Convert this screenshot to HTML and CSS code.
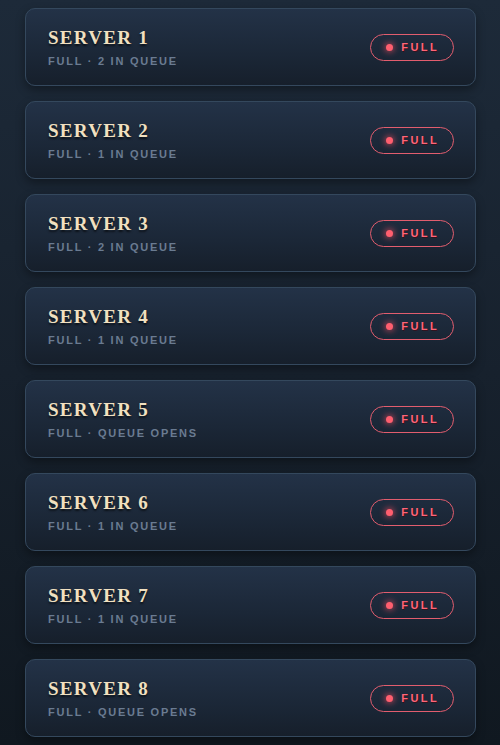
FILE: index.html
```html
<!DOCTYPE html>
<html lang="en">
<head>
  <meta charset="UTF-8">
  <meta name="viewport" content="width=device-width, initial-scale=1.0">
  <title>Servers</title>
<link rel="stylesheet" href="styles.css">
</head>
<body>
  <div class="server-list">
    <div class="server">
      <div class="info">
        <h3>Server 1</h3>
        <p>Full · 2 in queue</p>
      </div>
      <span class="badge"><i class="dot"></i>Full</span>
    </div>
    <div class="server">
      <div class="info">
        <h3>Server 2</h3>
        <p>Full · 1 in queue</p>
      </div>
      <span class="badge"><i class="dot"></i>Full</span>
    </div>
    <div class="server">
      <div class="info">
        <h3>Server 3</h3>
        <p>Full · 2 in queue</p>
      </div>
      <span class="badge"><i class="dot"></i>Full</span>
    </div>
    <div class="server">
      <div class="info">
        <h3>Server 4</h3>
        <p>Full · 1 in queue</p>
      </div>
      <span class="badge"><i class="dot"></i>Full</span>
    </div>
    <div class="server">
      <div class="info">
        <h3>Server 5</h3>
        <p>Full · queue opens</p>
      </div>
      <span class="badge"><i class="dot"></i>Full</span>
    </div>
    <div class="server">
      <div class="info">
        <h3>Server 6</h3>
        <p>Full · 1 in queue</p>
      </div>
      <span class="badge"><i class="dot"></i>Full</span>
    </div>
    <div class="server">
      <div class="info">
        <h3>Server 7</h3>
        <p>Full · 1 in queue</p>
      </div>
      <span class="badge"><i class="dot"></i>Full</span>
    </div>
    <div class="server">
      <div class="info">
        <h3>Server 8</h3>
        <p>Full · queue opens</p>
      </div>
      <span class="badge"><i class="dot"></i>Full</span>
    </div>
  </div>
</body>
</html>
```
FILE: styles.css
```css
html {
  min-height: 100%;
  background: linear-gradient(180deg, #1d2a39 0%, #17212d 50%, #101820 100%);
}

body {
  font-family: "Liberation Sans", Arial, sans-serif;
  margin: 0;
  padding: 8px 24px 8px 25px;
}

.server-list {
  display: flex;
  flex-direction: column;
  gap: 15px;
}

.server {
  height: 76px;
  display: flex;
  align-items: center;
  justify-content: space-between;
  padding: 0 21px 0 22px;
  border: 1px solid #34485d;
  border-radius: 10px;
  background: linear-gradient(180deg, #233247 0%, #1b2737 60%, #161f2b 100%);
  box-shadow: 0 4px 10px rgba(0, 0, 0, 0.35);
}

.info h3 {
  margin: 0 0 6px;
  font-family: "Liberation Serif", serif;
  font-size: 19px;
  font-weight: bold;
  text-transform: uppercase;
  letter-spacing: 1.3px;
  color: #f1e0c0;
  text-shadow: 0 2px 2px rgba(0, 0, 0, 0.6);
}

.info p {
  margin: 0;
  font-size: 11px;
  font-weight: bold;
  text-transform: uppercase;
  letter-spacing: 1.75px;
  color: #6a7b91;
}

.badge {
  display: flex;
  align-items: center;
  gap: 8px;
  height: 25px;
  padding: 0 14px 0 15px;
  border: 1px solid #e25d6e;
  border-radius: 14px;
  font-size: 11px;
  font-weight: bold;
  text-transform: uppercase;
  letter-spacing: 2.4px;
  color: #ff6578;
  text-shadow: 1px 1px 0 rgba(60, 10, 20, 0.7);
}

.dot {
  width: 7px;
  height: 7px;
  border-radius: 50%;
  background: #ff5f6f;
  box-shadow: 0 0 6px 1px rgba(255, 80, 100, 0.7);
}
```
